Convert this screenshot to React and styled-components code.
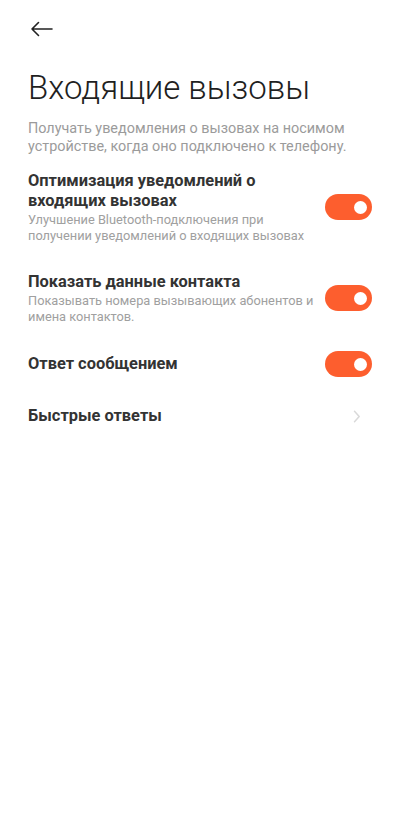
import React from 'react';
import styled, { createGlobalStyle } from 'styled-components';

const GlobalStyle = createGlobalStyle`
  html, body {
    margin: 0;
    padding: 0;
    background: #ffffff;
  }
  body {
    font-family: 'Roboto', 'Noto Sans', sans-serif;
    -webkit-font-smoothing: antialiased;
  }
`;

const Page = styled.div`
  width: 400px;
  min-height: 814px;
  background: #ffffff;
  padding: 0 28px;
  box-sizing: border-box;
`;

const TopBar = styled.div`
  height: 58px;
  display: flex;
  align-items: center;
`;

const BackButton = styled.button`
  border: none;
  background: none;
  padding: 0;
  margin-left: 2px;
  width: 24px;
  height: 24px;
  display: flex;
  align-items: center;
  justify-content: center;
  cursor: pointer;
`;

const Title = styled.h1`
  margin: 10px 0 0;
  font-family: 'Roboto', sans-serif;
  font-weight: 300;
  font-size: 33px;
  line-height: 40px;
  color: #1f1f1f;
`;

const Intro = styled.p`
  margin: 12px 0 0;
  font-size: 14.4px;
  line-height: 18px;
  color: #9b9b9b;
`;

const List = styled.div`
  display: flex;
  flex-direction: column;
`;

const Row = styled.div`
  display: flex;
  align-items: center;
  justify-content: space-between;
  gap: 10px;
  padding: ${({ $pad }) => $pad || '12px 0'};
  cursor: pointer;
`;

const Texts = styled.div`
  display: flex;
  flex-direction: column;
  min-width: 0;
`;

const RowTitle = styled.div`
  font-size: 16.4px;
  font-weight: 700;
  line-height: 20px;
  color: #333333;
`;

const RowHint = styled.div`
  margin-top: 1px;
  font-size: 12.8px;
  line-height: 15.5px;
  color: #a0a0a0;
`;

const Track = styled.div`
  flex: none;
  width: 47px;
  height: 26px;
  border-radius: 13px;
  background: ${({ $on }) => ($on ? '#fd5e2e' : '#e5e5e5')};
  position: relative;
`;

const Knob = styled.span`
  position: absolute;
  top: 6.5px;
  left: ${({ $on }) => ($on ? '29px' : '5px')};
  width: 13px;
  height: 13px;
  border-radius: 50%;
  background: #ffffff;
`;

const Chevron = styled.span`
  flex: none;
  margin-right: 11px;
  display: flex;
`;

function Toggle({ on }) {
  return (
    <Track $on={on}>
      <Knob $on={on} />
    </Track>
  );
}

const settings = [
  {
    title: 'Оптимизация уведомлений о входящих вызовах',
    hint: 'Улучшение Bluetooth-подключения при получении уведомлений о входящих вызовах',
    on: true,
    pad: '15px 0 14px',
  },
  {
    title: 'Показать данные контакта',
    hint: 'Показывать номера вызывающих абонентов и имена контактов.',
    on: true,
    pad: '15px 0 10px',
  },
  { title: 'Ответ сообщением', on: true, pad: '17px 0 14px' },
];

export default function App() {
  return (
    <Page>
      <GlobalStyle />
      <TopBar>
        <BackButton aria-label="Назад">
          <svg width="24" height="16" viewBox="0 0 24 16" fill="none">
            <path d="M22 8H2M8.5 1.5L2 8l6.5 6.5" stroke="#222" strokeWidth="1.6" strokeLinecap="round" strokeLinejoin="round" />
          </svg>
        </BackButton>
      </TopBar>

      <Title>Входящие вызовы</Title>
      <Intro>Получать уведомления о вызовах на носимом устройстве, когда оно подключено к телефону.</Intro>

      <List>
        {settings.map((s) => (
          <Row key={s.title} $pad={s.pad}>
            <Texts>
              <RowTitle>{s.title}</RowTitle>
              {s.hint && <RowHint>{s.hint}</RowHint>}
            </Texts>
            <Toggle on={s.on} />
          </Row>
        ))}
        <Row $pad="15px 0">
          <Texts>
            <RowTitle>Быстрые ответы</RowTitle>
          </Texts>
          <Chevron>
            <svg width="8" height="13" viewBox="0 0 8 13" fill="none">
              <path d="M1.5 1.2L6.2 6.5 1.5 11.8" stroke="#d9d9d9" strokeWidth="1.5" strokeLinecap="round" strokeLinejoin="round" />
            </svg>
          </Chevron>
        </Row>
      </List>
    </Page>
  );
}
